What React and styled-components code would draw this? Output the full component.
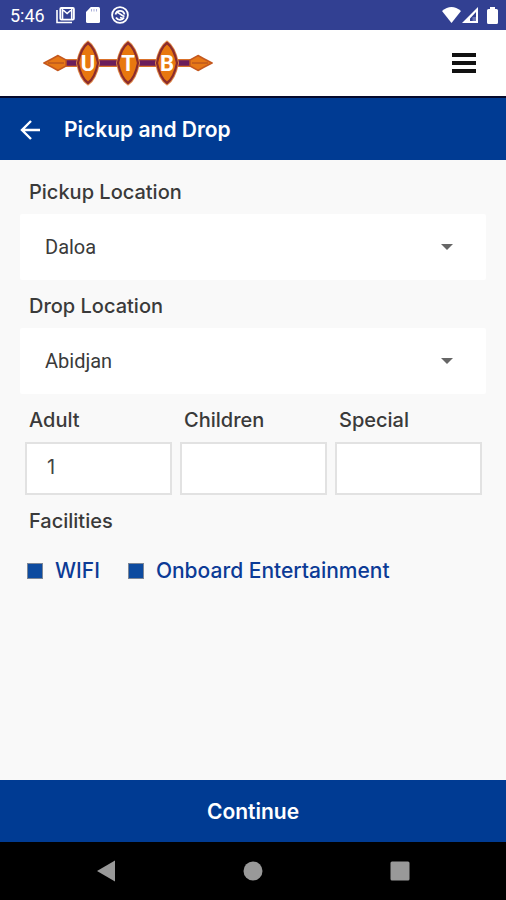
import * as React from "react";
import styled, { createGlobalStyle } from 'styled-components';

const passengers = [
    { id: 'adult', label: 'Adult', value: '1' },
    { id: 'children', label: 'Children', value: '' },
    { id: 'special', label: 'Special', value: '' },
];

const facilities = [
    { id: 'wifi', label: 'WIFI' },
    { id: 'entertainment', label: 'Onboard Entertainment' },
];

const GlobalStyle = createGlobalStyle`
    * {
        box-sizing: border-box;
    }
    body {
        margin: 0;
        background: #f9f9f9;
        font-family: Inter, sans-serif;
        color: #3a3a3a;
    }
    button, input, select {
        font-family: inherit;
        margin: 0;
    }
    svg {
        display: block;
    }
`;

const StatusBar = () => (
    <StyledStatusBar>
        <StatusGroup>
            <time>5:46</time>
            <svg width="19" height="17" viewBox="0 0 19 17" fill="none" stroke="#fff">
                <path d="M1 3v12.5h15" strokeWidth="1.6" />
                <rect x="4.3" y="1" width="13.6" height="11.6" rx="1" strokeWidth="1.8" />
                <path d="M6.500 2.500l4.600 4 4.600-4M6.500 2v10M15.700 2v10" strokeWidth="1.6" />
            </svg>
            <svg width="14" height="16" viewBox="0 0 14 16">
                <path d="M4.8 0H12.5Q14 0 14 1.5V14.5Q14 16 12.5 16H1.5Q0 16 0 14.5V5z" fill="#fff" />
                <path d="M5.5 2v2.500M8 2v2.500M10.500 2v2.500" stroke="#a9aed8" />
            </svg>
            <svg width="18" height="18" viewBox="0 0 18 18" fill="none" stroke="#fff">
                <circle cx="9" cy="9" r="7.9" strokeWidth="1.8" />
                <path d="M4.500 8.500A4.600 4.600 0 0 1 13.500 8.500M13 11.500A4.600 4.600 0 0 1 5 11.500" strokeWidth="1.8" />
                <path d="M5.500 6.500C8 6 9 9 13.500 10.500M9 11.500l3 1" strokeWidth="1.8" />
            </svg>
        </StatusGroup>
        <StatusGroup $tight>
            <svg width="19" height="16" viewBox="0 0 19 16">
                <path d="M0 4Q9.5-4 19 4L9.5 16z" fill="#fff" />
            </svg>
            <svg width="16" height="16" viewBox="0 0 16 16">
                <path fillRule="evenodd" d="M16 0v16H0zM14 5L8 11.500V14h6z" fill="#fff" />
                <path d="M10.500 10H14v4h-3.500z" fill="#6b74b5" />
            </svg>
            <BatteryIcon width="11" height="17" viewBox="0 0 11 17">
                <path d="M3 0h5v2H9.500Q11 2 11 3.500V15.500Q11 17 9.500 17H1.500Q0 17 0 15.500V3.500Q0 2 1.500 2H3z" fill="#fff" />
            </BatteryIcon>
        </StatusGroup>
    </StyledStatusBar>
);

const Logo = () => (
    <svg width="170" height="46" viewBox="0 0 170 46" role="img" aria-label="UTB">
        <path d="M20 23H150" stroke="#d9712a" strokeWidth="8" />
        <path d="M20 23H150" stroke="#6b1d5c" strokeWidth="5.5" />
        <g fill="#e77817" stroke="#c4581f" strokeWidth="1.5">
            <path d="M1 23Q9 19 15 15.500L23 20v6l-8 4.500Q9 27 1 23z" />
            <path d="M169 23Q161 19 155 15.500L147 20v6l8 4.500Q161 27 169 23z" />
        </g>
        <path d="M5 23h16M149 23h16" stroke="#a84822" />
        {[['U', 45], ['T', 85], ['B', 124]].map(([letter, x]) => (
            <g key={letter} transform={`translate(${x} 23)`} strokeLinejoin="round">
                <path d="M0-21.500Q8-16 11 0 8 16 0 21.500-8 16-11 0-8-16 0-21.500z" fill="#e8780f" stroke="#e08a4a" strokeWidth="2" />
                <path d="M0-20Q7-15 10 0 7 15 0 20-7 15-10 0-7-15 0-20z" fill="#e8780f" stroke="#8c2c2c" strokeWidth="2.2" />
                <text y="8" textAnchor="middle" fontFamily="Roboto, sans-serif" fontWeight="700" fontSize="22" fill="#fff">{letter}</text>
            </g>
        ))}
    </svg>
);

const LocationSelect = (props) => {
    const { id, label, options } = props;

    return (
        <>
            <FieldLabel htmlFor={id} $indent>{label}</FieldLabel>
            <SelectBox>
                <select id={id} defaultValue={options[0]}>
                    {options.map((option) => (
                        <option key={option}>{option}</option>
                    ))}
                </select>
                <svg width="12" height="6" viewBox="0 0 12 6">
                    <path d="M0 0h12L6 6z" fill="#666" />
                </svg>
            </SelectBox>
        </>
    )
};

const App = () => (
    <Page>
        <GlobalStyle />
        <StatusBar />
        <Header>
            <Logo />
            <IconButton aria-label="Menu">
                <svg width="24" height="20" viewBox="0 0 24 20">
                    <path d="M0 2h24M0 10h24M0 18h24" stroke="#111" strokeWidth="4" />
                </svg>
            </IconButton>
        </Header>
        <TitleBar>
            <IconButton aria-label="Back">
                <svg width="20" height="20" viewBox="0 0 20 20" fill="none" stroke="#fff" strokeWidth="2.4">
                    <path d="M20 10H2M11 1L2 10l9 9" />
                </svg>
            </IconButton>
            <h1>Pickup and Drop</h1>
        </TitleBar>
        <Form id="trip">
            <LocationSelect id="pickup" label="Pickup Location" options={['Daloa', 'Abidjan']} />
            <LocationSelect id="drop" label="Drop Location" options={['Abidjan', 'Daloa']} />
            <PassengerRow>
                {passengers.map((item) => (
                    <div key={item.id}>
                        <FieldLabel htmlFor={item.id}>{item.label}</FieldLabel>
                        <NumberInput id={item.id} type="text" inputMode="numeric" defaultValue={item.value} />
                    </div>
                ))}
            </PassengerRow>
            <Facilities>
                <legend>Facilities</legend>
                <FacilityList>
                    {facilities.map((item) => (
                        <FacilityLabel key={item.id}>
                            <input type="checkbox" defaultChecked />
                            {item.label}
                        </FacilityLabel>
                    ))}
                </FacilityList>
            </Facilities>
        </Form>
        <ContinueButton type="submit" form="trip">Continue</ContinueButton>
        <NavBar>
            <IconButton aria-label="System back">
                <svg width="20" height="22" viewBox="0 0 20 22">
                    <path d="M1 11L19 .5v21z" fill="#999" />
                </svg>
            </IconButton>
            <IconButton aria-label="Home">
                <svg width="20" height="20" viewBox="0 0 20 20">
                    <circle cx="10" cy="10" r="9.5" fill="#999" />
                </svg>
            </IconButton>
            <IconButton aria-label="Recent apps">
                <svg width="20" height="20" viewBox="0 0 20 20">
                    <rect x=".5" y=".5" width="19" height="19" rx="1.5" fill="#999" />
                </svg>
            </IconButton>
        </NavBar>
    </Page>
);

const Page = styled.div`
    min-height: 100vh;
    display: flex;
    flex-direction: column;
`;

const StyledStatusBar = styled.div`
    height: 30px;
    padding: 0 8px 0 10px;
    background: #324092;
    color: #fff;
    font-family: Roboto, sans-serif;
    font-size: 18px;
    display: flex;
    align-items: center;
    justify-content: space-between;
`;

const StatusGroup = styled.div`
    display: flex;
    align-items: center;
    gap: ${(props) => (props.$tight ? '1px' : '11px')};
`;

const BatteryIcon = styled.svg`
    margin-left: 8px;
`;

const Header = styled.header`
    height: 68px;
    padding: 0 30px 0 43px;
    background: #fff;
    border-bottom: 2px solid #050a2c;
    display: flex;
    align-items: center;
    justify-content: space-between;
`;

const IconButton = styled.button`
    padding: 0;
    border: 0;
    background: none;
    cursor: pointer;
`;

const TitleBar = styled.div`
    height: 62px;
    padding: 2px 20px 0;
    background: #003b93;
    color: #fff;
    display: flex;
    align-items: center;
    gap: 24px;
    h1 {
        margin: 0;
        font-size: 21px;
        line-height: 28px;
        font-weight: 600;
    }
`;

const Form = styled.form`
    flex: 1;
    padding: 6px 20px 24px;
`;

const FieldLabel = styled.label`
    display: block;
    margin: 12px 0 8px;
    padding-left: ${(props) => (props.$indent ? '9px' : '4px')};
    font-size: 20px;
    line-height: 28px;
    font-weight: 500;
`;

const SelectBox = styled.div`
    position: relative;
    select {
        display: block;
        appearance: none;
        width: 100%;
        height: 66px;
        padding: 0 56px 0 25px;
        border: 0;
        border-radius: 2px;
        background: #fff;
        color: #3a3a3a;
        font-family: Roboto, sans-serif;
        font-size: 20px;
        font-weight: 400;
    }
    svg {
        position: absolute;
        right: 33px;
        top: calc(50% - 3px);
        pointer-events: none;
    }
`;

const PassengerRow = styled.div`
    padding: 0 4px 0 5px;
    display: grid;
    grid-template-columns: repeat(3, 1fr);
    gap: 8px;
`;

const NumberInput = styled.input`
    display: block;
    width: 100%;
    height: 53px;
    padding: 0 20px 4px;
    border: 2px solid #e2e2e2;
    border-radius: 0;
    background: #fff;
    color: #444;
    font-size: 20px;
`;

const Facilities = styled.fieldset`
    margin: 12px 0 0;
    padding: 0;
    border: 0;
    legend {
        padding: 0 0 0 9px;
        font-size: 20px;
        line-height: 28px;
        font-weight: 500;
    }
`;

const FacilityList = styled.div`
    margin-top: 22px;
    padding-left: 7px;
    display: flex;
    flex-wrap: wrap;
    gap: 8px 28px;
`;

const FacilityLabel = styled.label`
    display: flex;
    align-items: center;
    gap: 12px;
    color: #0c3b96;
    font-size: 21px;
    line-height: 28px;
    font-weight: 500;
    input {
        appearance: none;
        width: 16px;
        height: 16px;
        border: 1px solid #7d8797;
        background: #fff;
        &:checked {
            background: #0d4ba0;
        }
    }
`;

const ContinueButton = styled.button`
    height: 62px;
    padding: 0 20px;
    border: 0;
    background: #003b93;
    color: #fff;
    font-size: 21px;
    font-weight: 600;
    cursor: pointer;
`;

const NavBar = styled.nav`
    height: 58px;
    padding: 0 33px;
    background: #000;
    display: grid;
    grid-template-columns: repeat(3, 1fr);
    align-items: center;
    justify-items: center;
`;

export default App;
